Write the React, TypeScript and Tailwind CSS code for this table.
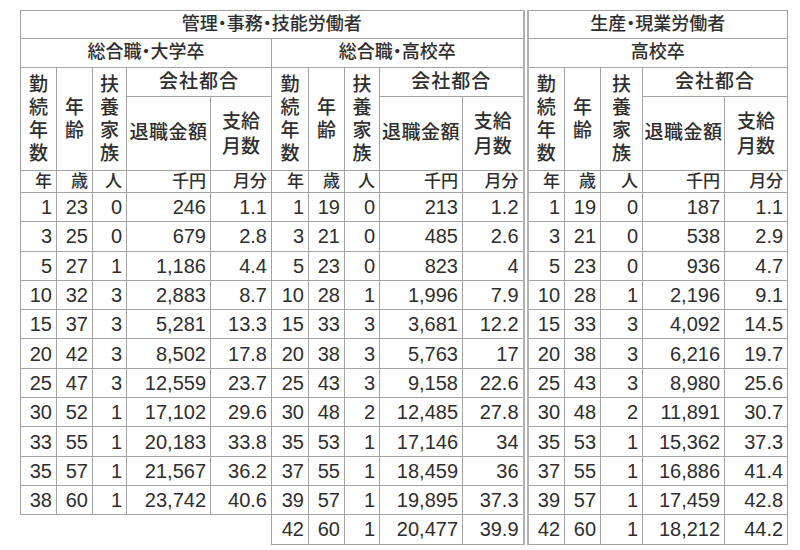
import React from 'react';

type Row = [string, string, string, string, string];

const DAIGAKU: Row[] = [
  ['1', '23', '0', '246', '1.1'],
  ['3', '25', '0', '679', '2.8'],
  ['5', '27', '1', '1,186', '4.4'],
  ['10', '32', '3', '2,883', '8.7'],
  ['15', '37', '3', '5,281', '13.3'],
  ['20', '42', '3', '8,502', '17.8'],
  ['25', '47', '3', '12,559', '23.7'],
  ['30', '52', '1', '17,102', '29.6'],
  ['33', '55', '1', '20,183', '33.8'],
  ['35', '57', '1', '21,567', '36.2'],
  ['38', '60', '1', '23,742', '40.6'],
];

const KOUKOU: Row[] = [
  ['1', '19', '0', '213', '1.2'],
  ['3', '21', '0', '485', '2.6'],
  ['5', '23', '0', '823', '4'],
  ['10', '28', '1', '1,996', '7.9'],
  ['15', '33', '3', '3,681', '12.2'],
  ['20', '38', '3', '5,763', '17'],
  ['25', '43', '3', '9,158', '22.6'],
  ['30', '48', '2', '12,485', '27.8'],
  ['35', '53', '1', '17,146', '34'],
  ['37', '55', '1', '18,459', '36'],
  ['39', '57', '1', '19,895', '37.3'],
  ['42', '60', '1', '20,477', '39.9'],
];

const GENGYOU: Row[] = [
  ['1', '19', '0', '187', '1.1'],
  ['3', '21', '0', '538', '2.9'],
  ['5', '23', '0', '936', '4.7'],
  ['10', '28', '1', '2,196', '9.1'],
  ['15', '33', '3', '4,092', '14.5'],
  ['20', '38', '3', '6,216', '19.7'],
  ['25', '43', '3', '8,980', '25.6'],
  ['30', '48', '2', '11,891', '30.7'],
  ['35', '53', '1', '15,362', '37.3'],
  ['37', '55', '1', '16,886', '41.4'],
  ['39', '57', '1', '17,459', '42.8'],
  ['42', '60', '1', '18,212', '44.2'],
];

const cell = 'border border-[#a3a3a3] p-0';
// the divider before 生産・現業労働者 is a double rule
const dbl = 'border-l-[6px] [border-left-style:double] border-l-[#b0b0b0]';
const num = 'text-right pr-[4px] text-[20px] leading-none';

function Stack({ chars }: { chars: string[] }) {
  return (
    <div className="flex flex-col items-center leading-[23px]">
      {chars.map((c, i) => (
        <span key={i}>{c}</span>
      ))}
    </div>
  );
}

function GroupHead({ first }: { first?: boolean }) {
  const b = first ? `${cell} ${dbl}` : cell;
  return (
    <>
      <th rowSpan={2} className={`${b} font-medium text-[19px]`}>
        <Stack chars={['勤', '続', '年', '数']} />
      </th>
      <th rowSpan={2} className={`${cell} font-medium text-[19px]`}>
        <Stack chars={['年', '齢']} />
      </th>
      <th rowSpan={2} className={`${cell} font-medium text-[19px]`}>
        <Stack chars={['扶', '養', '家', '族']} />
      </th>
      <th colSpan={2} className={`${cell} font-medium text-[19px] tracking-[1px]`}>
        会社都合
      </th>
    </>
  );
}

function SubHead() {
  return (
    <>
      <th className={`${cell} font-medium text-[19px] tracking-[0.5px] whitespace-nowrap`}>退職金額</th>
      <th className={`${cell} font-medium text-[19px]`}>
        <div className="flex flex-col items-center leading-[25px]">
          <span>支給</span>
          <span>月数</span>
        </div>
      </th>
    </>
  );
}

function Units({ first }: { first?: boolean }) {
  const u = 'text-right pr-[4px] font-medium text-[17px] leading-none';
  return (
    <>
      <td className={`${cell} ${u} ${first ? dbl : ''}`}>年</td>
      <td className={`${cell} ${u}`}>歳</td>
      <td className={`${cell} ${u}`}>人</td>
      <td className={`${cell} ${u}`}>千円</td>
      <td className={`${cell} ${u}`}>月分</td>
    </>
  );
}

function DataCells({ row, first }: { row?: Row; first?: boolean }) {
  if (!row) {
    return (
      <>
        {[0, 1, 2, 3, 4].map(i => (
          <td key={i} className="p-0" />
        ))}
      </>
    );
  }
  return (
    <>
      {row.map((v, i) => (
        <td key={i} className={`${cell} ${num} ${first && i === 0 ? dbl : ''}`}>
          {v}
        </td>
      ))}
    </>
  );
}

export default function App() {
  return (
    <div className="w-[800px] h-[550px] bg-white overflow-hidden pt-[10px] pl-[20px] text-[#2e2e2e] font-['Liberation_Sans','Noto_Sans_CJK_JP',sans-serif] [font-feature-settings:'palt']">
      <table className="table-fixed border-collapse w-[768px]">
        <colgroup>
          <col className="w-[36px]" />
          <col className="w-[36px]" />
          <col className="w-[34px]" />
          <col className="w-[84px]" />
          <col className="w-[61px]" />
          <col className="w-[37px]" />
          <col className="w-[36px]" />
          <col className="w-[35px]" />
          <col className="w-[83px]" />
          <col className="w-[63px]" />
          <col className="w-[39px]" />
          <col className="w-[36px]" />
          <col className="w-[42px]" />
          <col className="w-[82px]" />
          <col className="w-[63px]" />
        </colgroup>
        <thead>
          <tr className="h-[28px]">
            <th colSpan={10} className={`${cell} font-medium text-[18px]`}>
              管理・事務・技能労働者
            </th>
            <th colSpan={5} className={`${cell} ${dbl} font-medium text-[18px]`}>
              生産・現業労働者
            </th>
          </tr>
          <tr className="h-[28.5px]">
            <th colSpan={5} className={`${cell} font-medium text-[18px]`}>
              総合職・大学卒
            </th>
            <th colSpan={5} className={`${cell} font-medium text-[18px]`}>
              総合職・高校卒
            </th>
            <th colSpan={5} className={`${cell} ${dbl} font-medium text-[18px]`}>
              高校卒
            </th>
          </tr>
          <tr className="h-[28px]">
            <GroupHead />
            <GroupHead />
            <GroupHead first />
          </tr>
          <tr className="h-[74px]">
            <SubHead />
            <SubHead />
            <SubHead />
          </tr>
          <tr className="h-[22px]">
            <Units />
            <Units />
            <Units first />
          </tr>
        </thead>
        <tbody>
          {KOUKOU.map((r, i) => (
            <tr key={i} className="h-[29.3px]">
              <DataCells row={DAIGAKU[i]} />
              <DataCells row={r} />
              <DataCells row={GENGYOU[i]} first />
            </tr>
          ))}
        </tbody>
      </table>
    </div>
  );
}
